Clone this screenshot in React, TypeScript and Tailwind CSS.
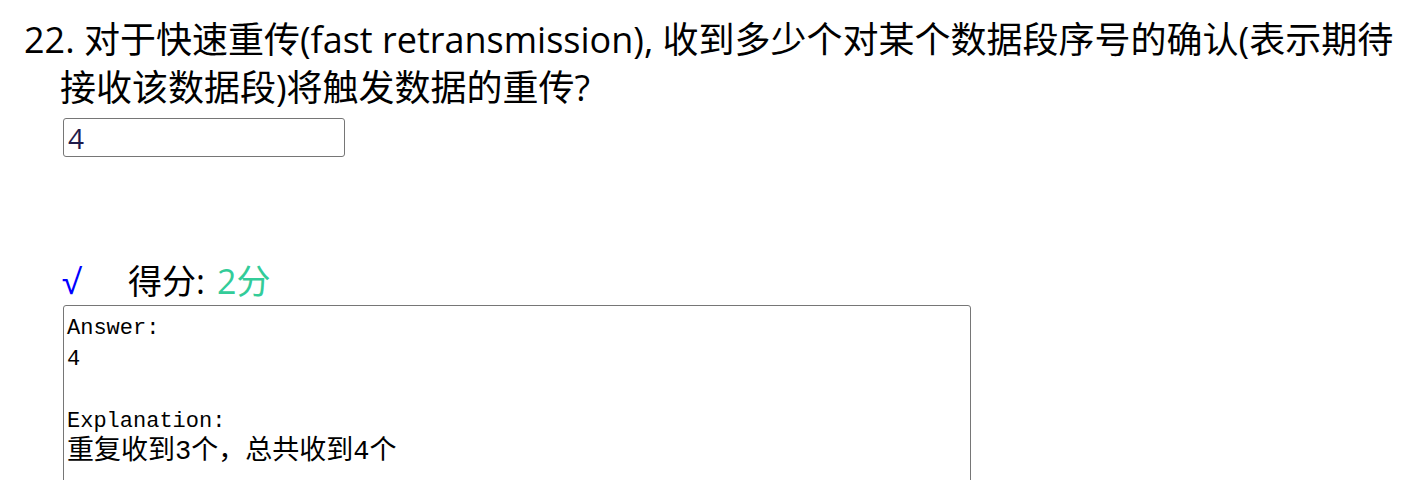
export default function App() {
  return (
    <div className="h-[480px] overflow-hidden bg-white text-black">
      <div className="pt-[16px]">
        <p
          className="pl-[60px] -indent-[36px] pr-[10px] text-[36px] leading-[48px]"
          style={{ fontFamily: '"Open Sans", "Noto Sans CJK SC", sans-serif' }}
        >
          22. 对于快速重传(fast retransmission), 收到多少个对某个数据段序号的确认(表示期待接收该数据段)将触发数据的重传?
        </p>
        <div className="ml-[63px] mt-[6px]">
          <input
            type="text"
            defaultValue="4"
            className="w-[282px] h-[39px] rounded-[3px] border border-[#767676] px-[4px] text-[28px] text-[#1e1b4b] outline-none"
            style={{ fontFamily: '"Open Sans", "Noto Sans CJK SC", sans-serif' }}
          />
        </div>
        <div
          className="ml-[62px] mt-[100px] flex items-center h-[48px] text-[34px]"
          style={{ fontFamily: '"Open Sans", "Noto Sans CJK SC", sans-serif' }}
        >
          <span className="text-[#0000ff] w-[66px]">√</span>
          <span>得分: </span>
          <span className="ml-[12px] text-[#33cc99]">2分</span>
        </div>
        <div className="ml-[63px] w-[908px] h-[200px] rounded-t-[3px] border border-[#767676] px-[3px] pt-[7px]">
          <div
            className="text-[22px] leading-[31px] text-black"
            style={{ fontFamily: '"Liberation Mono", "Noto Sans CJK SC", monospace' }}
          >
            <div>Answer:</div>
            <div>4</div>
            <div>&nbsp;</div>
            <div>Explanation:</div>
            <div className="text-[27px]">重复收到3个，总共收到4个</div>
          </div>
        </div>
      </div>
    </div>
  );
}
